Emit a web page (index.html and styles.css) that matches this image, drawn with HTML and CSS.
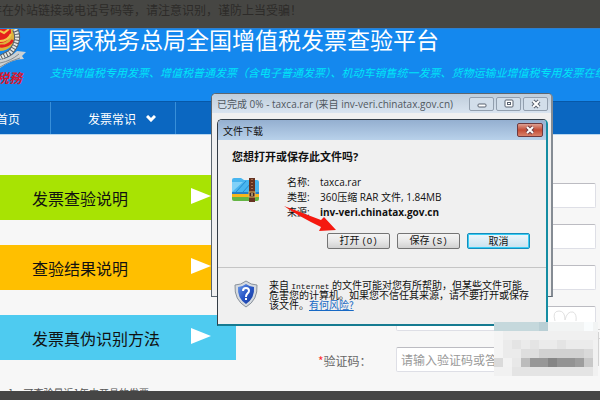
FILE: index.html
```html
<!DOCTYPE html>
<html lang="zh-CN">
<head>
<meta charset="utf-8">
<title>国家税务总局全国增值税发票查验平台</title>
<link rel="stylesheet" href="styles.css">
</head>
<body>
<div class="notice">存在外站链接或电话号码等，请注意识别，谨防上当受骗！</div>
<header class="header">
  <svg class="logo" width="27" height="59" viewBox="0 0 27 59" aria-hidden="true">
    <circle cx="0" cy="6" r="16" fill="#dcb23c"/>
    <circle cx="0" cy="3" r="11" fill="#e6211c"/>
    <path d="M0 2L4 4L9 0M0 12Q8 12 11 5" fill="none" stroke="#f4c84b" stroke-width="2"/>
    <path d="M0 17Q8 18 13 11" fill="none" stroke="#e6211c" stroke-width="3"/>
    <path d="M15 0Q21 11 10 24L0 29" fill="none" stroke="#586068" stroke-width="6"/>
    <path d="M15 0Q21 11 10 24L0 29" fill="none" stroke="#e6e8e4" stroke-width="4" stroke-dasharray="2 1"/>
    <path d="M0 31Q10 29 17 22L26 23L22 27L24 30Q12 30 0 39Z" fill="#cdd1d3"/>
    <path d="M0 34Q11 32 19 25M0 38Q9 32 20 29" fill="none" stroke="#858c91" stroke-width="1"/>
    <text class="logo-text" x="-4" y="54">税務</text>
  </svg>
  <div class="headline">
    <h1>国家税务总局全国增值税发票查验平台</h1>
    <p>支持增值税专用发票、增值税普通发票（含电子普通发票）、机动车销售统一发票、货物运输业增值税专用发票在线查验</p>
  </div>
</header>
<nav class="nav">
  <a class="home" href="#">首页</a>
  <a class="topic" href="#">发票常识
    <svg width="10" height="7" viewBox="0 0 10 7" aria-hidden="true"><path d="M1 1L5 5L9 1" fill="none" stroke="#fff" stroke-width="3"/></svg>
  </a>
</nav>
<main class="main">
  <section class="guides">
    <a class="guide green" href="#">发票查验说明<i></i></a>
    <a class="guide yellow" href="#">查验结果说明<i></i></a>
    <a class="guide blue" href="#">发票真伪识别方法<i></i></a>
    <p class="remark">1、可查验最近1年内开具的发票</p>
  </section>
  <form class="form">
    <input type="text" aria-label="发票代码">
    <input type="text" aria-label="发票号码">
    <input type="text" aria-label="开票日期">
    <input type="text" aria-label="开具金额">
    <label for="captcha"><b>*</b>验证码：</label>
    <input id="captcha" type="text" placeholder="请输入验证码或答案">
  </form>
</main>
<footer class="footer"></footer>

<section class="window progress">
  <div class="titlebar">
    <span>已完成 0% - taxca.rar (来自 inv-veri.chinatax.gov.cn)</span>
    <div class="controls">
      <button type="button" aria-label="最小化"><svg width="12" height="10" viewBox="0 0 12 10"><rect x="2" y="5" width="8" height="3" rx="1" fill="#fff" stroke="#596270"/></svg></button>
      <button type="button" aria-label="最大化"><svg width="12" height="10" viewBox="0 0 12 10"><rect x="2" y="1" width="8" height="7" rx="1" fill="#fff" stroke="#596270"/><rect x="4.500" y="3.500" width="3" height="2" fill="#fff" stroke="#596270"/></svg></button>
      <button type="button" aria-label="关闭"><svg width="12" height="10" viewBox="0 0 12 10"><path d="M3 2L9 8M9 2L3 8" stroke="#596270" stroke-width="4"/><path d="M3 2L9 8M9 2L3 8" stroke="#fff" stroke-width="2"/></svg></button>
    </div>
  </div>
</section>

<section class="window download">
  <div class="download-title">
    <span>文件下载</span>
    <button type="button" aria-label="关闭"><svg width="12" height="10" viewBox="0 0 12 10"><path d="M3 2L9 8M9 2L3 8" stroke="#704047" stroke-width="4"/><path d="M3 2L9 8M9 2L3 8" stroke="#fff" stroke-width="2"/></svg></button>
  </div>
  <div class="download-body">
    <h2>您想打开或保存此文件吗?</h2>
    <div class="file">
      <svg width="28" height="26" viewBox="0 0 28 26" aria-hidden="true">
        <path d="M0 3Q0 1 2 1H9L12 3H25Q27 3 27 5V17H0Z" fill="#48b5ef"/>
        <path d="M0 5L11 5L0 15Z" fill="#81d1f8"/>
        <path d="M4 15L14 4M11 15L19 6" stroke="#268bd1" stroke-width="1"/>
        <path d="M0 15H27V18H0Z" fill="#247ec7"/>
        <path d="M0 17H27V21H0Z" fill="#f7b51c"/>
        <path d="M0 20H27V22Q27 24 25 24H2Q0 24 0 22Z" fill="#64b544"/>
        <path d="M17 1H23V25H17Z" fill="#663321"/>
        <path d="M20 2V14" stroke="#a66f4e" stroke-width="2" stroke-dasharray="1 2"/>
        <rect x="17" y="15" width="6" height="5" fill="#3f211b" stroke="#e4b660"/>
        <path d="M20 16V19" stroke="#fff0b0"/>
      </svg>
      <dl>
        <dt>名称:</dt><dd>taxca.rar</dd>
        <dt>类型:</dt><dd>360压缩 RAR 文件, 1.84MB</dd>
        <dt>来源:</dt><dd class="host">inv-veri.chinatax.gov.cn</dd>
      </dl>
    </div>
    <div class="actions">
      <button type="button">打开<span>(O)</span></button>
      <button type="button">保存<span>(S)</span></button>
      <button type="button" class="default">取消</button>
    </div>
  </div>
  <div class="warning">
    <svg width="24" height="28" viewBox="0 0 24 28" aria-hidden="true">
      <defs><linearGradient id="shield" x1="0" y1="0" x2="1" y2="1"><stop offset="0" stop-color="#6c9bea"/><stop offset=".5" stop-color="#2856c6"/><stop offset="1" stop-color="#163a9c"/></linearGradient></defs>
      <path d="M12 1Q17 5 23 5Q24 20 12 27Q0 20 1 5Q7 5 12 1Z" fill="#d5dae0" stroke="#8a929b"/>
      <path d="M12 4Q16 7 20 7Q21 18 12 24Q3 18 4 7Q8 7 12 4Z" fill="url(#shield)"/>
      <path d="M9 11Q9 8 12 8Q15 8 15 11Q15 12 13 14Q12 15 12 17M12 18V20" fill="none" stroke="#fff" stroke-width="2"/>
    </svg>
    <p>来自 <span>Internet</span> 的文件可能对您有所帮助，但某些文件可能<br>危害您的计算机。如果您不信任其来源，请不要打开或保存<br>该文件。<a href="#">有何风险?</a></p>
  </div>
</section>

<svg class="pointer" width="54" height="28" viewBox="0 0 54 28" aria-hidden="true"><path d="M0 0L37 14L40 11L52 24L35 25L37 21Q14 10 0 0Z" fill="#f51910"/></svg>

<svg class="mosaic" width="106" height="70" viewBox="0 0 106 70" shape-rendering="crispEdges" aria-hidden="true">
  <path d="M61 15Q58 5 65 5Q71 5 71 14M71 14Q73 5 79 6Q83 8 82 15" fill="none" stroke="#e1e1e1" stroke-width="1" shape-rendering="auto"/>
  <path d="M104 23H106M104 26V60M104 32H106" stroke="#d3d3d3" fill="none"/>
  <path d="M0 16H104V70H0Z" fill="#ebebeb"/>
  <path d="M0 16H45V25H0Z" fill="#c5d8dc"/><path d="M45 16H54V25H45Z" fill="#b9cfd5"/>
  <path d="M54 16H104V25H54Z" fill="#f2f4f4"/><path d="M90 16H99V25H90Z" fill="#f9fcfd"/>
  <path d="M0 25H9V52H0Z" fill="#f4f4f4"/><path d="M9 25H36V34H9Z" fill="#efefef"/><path d="M36 25H104V34H36Z" fill="#f0f0f0"/>
  <path d="M18 34H27V43H18ZM36 34H45V43H36ZM63 34H72V43H63Z" fill="#e4e4e4"/>
  <path d="M27 43H45V52H27Z" fill="#dedede"/><path d="M45 43H90V52H45Z" fill="#d1d1d1"/><path d="M90 43H99V52H90Z" fill="#d9d9d9"/>
  <path d="M0 52H9V61H0Z" fill="#dadada"/><path d="M9 52H18V61H9Z" fill="#f2f2f2"/><path d="M18 52H27V61H18Z" fill="#e8e8e8"/>
  <path d="M27 52H36V61H27Z" fill="#bcbcbc"/><path d="M36 52H54V61H36Z" fill="#979797"/><path d="M54 52H63V61H54Z" fill="#858585"/><path d="M63 52H81V61H63Z" fill="#939393"/><path d="M81 52H90V61H81Z" fill="#9d9d9d"/><path d="M90 52H99V61H90Z" fill="#c8c8c8"/>
  <path d="M0 61H18V70H0Z" fill="#f1f1f1"/><path d="M18 61H99V70H18Z" fill="#e4e4e4"/><path d="M99 34H104V70H99Z" fill="#f1f1f1"/>
</svg>
</body>
</html>
```
FILE: styles.css
```css
* { box-sizing: border-box; }

body {
  position: relative;
  display: flex;
  flex-direction: column;
  height: 100vh;
  margin: 0;
  overflow: hidden;
  background: #f7f7f7;
  color: #111;
  font-family: "Open Sans", "Noto Sans CJK SC", sans-serif;
  font-size: 12px;
}

h1, h2, p, dl, dd { margin: 0; }
a { color: inherit; text-decoration: none; }
button { padding: 0; font-family: inherit; }

.notice,
.header,
.nav,
.footer { flex: none; }

.notice {
  height: 28px;
  text-indent: -10px;
  background: #464643;
  color: #2d2b29;
  font-family: "Noto Sans CJK SC", sans-serif;
  font-size: 12px;
  line-height: 20px;
  white-space: nowrap;
}

.header {
  display: flex;
  gap: 21px;
  height: 73px;
  overflow: hidden;
  background: #1488ee;
  border-top: 1px solid #2d7fd0;
  white-space: nowrap;
}
.logo { flex: none; }
.logo-text {
  fill: #d9162c;
  font-family: "Noto Sans CJK SC", sans-serif;
  font-size: 13px;
  font-style: italic;
  font-weight: 700;
}
.headline { font-family: "Noto Sans CJK SC", sans-serif; }
.headline h1 {
  color: #fff;
  font-size: 23px;
  font-weight: 400;
  line-height: 20px;
}
.headline p {
  margin-top: 14px;
  padding-left: 2px;
  color: #00e5f8;
  font-size: 11px;
  font-style: italic;
  line-height: 18px;
}

.nav {
  display: flex;
  height: 34px;
  background: #0b67c1;
  border-top: 1px solid #0758a8;
  border-bottom: 1px solid #b9d7ef;
  color: #fff;
  font-family: "Noto Sans CJK SC", sans-serif;
  font-size: 12px;
  line-height: 33px;
}
.nav a { border-right: 1px solid #388fd9; }
.home { width: 51px; text-indent: -4px; }
.topic {
  display: flex;
  align-items: center;
  gap: 10px;
  width: 125px;
  padding-left: 37px;
}

.main {
  display: flex;
  flex: 1;
  justify-content: space-between;
  min-height: 0;
  overflow: hidden;
}
.guides {
  display: flex;
  flex-direction: column;
  gap: 25px;
  width: 236px;
  padding-top: 40px;
  font-family: "Noto Sans CJK SC", sans-serif;
}
.guide {
  display: flex;
  flex: none;
  align-items: center;
  justify-content: space-between;
  height: 45px;
  padding: 0 25px 0 32px;
  font-size: 16px;
}
.guide i {
  width: 20px;
  height: 16px;
  margin-bottom: 3px;
  background: #fff;
  clip-path: polygon(0 0, 100% 50%, 0 100%);
}
.green { background: #a8e303; }
.yellow { background: #ffbf00; }
.blue { background: #4ecbf0; }
.remark {
  padding-left: 8px;
  color: #555;
  font-size: 10px;
  line-height: 16px;
}

.form {
  display: grid;
  grid-template-columns: 78px 200px;
  grid-auto-rows: 25px;
  row-gap: 16px;
  padding: 48px 4px 0 0;
  font-family: "Noto Sans CJK SC", sans-serif;
}
.form input {
  grid-column: 2;
  min-width: 0;
  height: 25px;
  padding: 0 4px;
  border: 1px solid #dedfe6;
  border-top-color: #bcbcc2;
  border-radius: 2px;
  background: #fff;
  font-family: inherit;
  font-size: 12px;
}
.form input::placeholder { color: #999; }
.form label {
  color: #666;
  line-height: 28px;
  white-space: nowrap;
}
.form label b { color: #f33; font-weight: 400; }

.footer { height: 9px; background: #464646; }

.window {
  position: absolute;
  border: 1px solid #44515e;
  background: #f0f0f0;
}
.progress {
  top: 93px;
  left: 211px;
  width: 342px;
  height: 204px;
  border: 1px solid #5c6670;
  border-right: 2px solid #858c94;
  border-radius: 5px 5px 0 0;
}
.titlebar {
  display: flex;
  align-items: center;
  justify-content: space-between;
  height: 19px;
  padding: 0 3px 0 5px;
  border-radius: 4px 4px 0 0;
  background: linear-gradient(#bfcddb, #d9e4f0);
  color: #505860;
  font-size: 10px;
  white-space: nowrap;
}
.controls { display: flex; gap: 2px; }
.controls button {
  display: grid;
  place-items: center;
  width: 25px;
  height: 14px;
  border: 1px solid #929fae;
  border-radius: 2px;
  background: #d2deea;
}

.download {
  top: 119px;
  left: 217px;
  width: 331px;
  height: 207px;
  border: 1px solid #333c45;
  border-right: 2px solid #158da3;
  border-bottom: 2px solid #167b91;
  border-radius: 5px 5px 0 0;
}
.download-title {
  display: flex;
  align-items: center;
  justify-content: space-between;
  height: 20px;
  padding: 0 3px 0 5px;
  border-radius: 4px 4px 0 0;
  background: linear-gradient(#94afd0, #b8d1ea);
  font-size: 10px;
}
.download-title button {
  display: grid;
  place-items: center;
  width: 26px;
  height: 14px;
  border: 1px solid #6d3a40;
  border-radius: 2px;
  background: linear-gradient(#dda093, #c34c36 50%, #d9826a);
}
.download-body {
  height: 128px;
  padding: 8px 16px 0 14px;
  border-bottom: 1px solid #c5c5c5;
}
.download h2 {
  font-size: 11px;
  font-weight: 700;
  line-height: 18px;
}
.file {
  display: flex;
  gap: 27px;
  margin-top: 9px;
}
.file svg { flex: none; margin-top: 2px; }
.file dl {
  display: grid;
  grid-template-columns: 33px auto;
  grid-auto-rows: 15px;
  align-items: center;
  font-size: 10px;
  line-height: 15px;
  white-space: nowrap;
}
.host { font-weight: 700; }
.actions {
  display: flex;
  justify-content: flex-end;
  gap: 7px;
  margin-top: 13px;
}
.actions button {
  width: 63px;
  height: 16px;
  border: 1px solid #747474;
  border-radius: 2px;
  background: linear-gradient(#f4f4f4, #e8e8e8 50%, #d2d2d2);
  color: #111;
  font-size: 10px;
  line-height: 12px;
}
.actions span {
  padding-left: 2px;
  font-family: "Liberation Mono", monospace;
  font-size: 9px;
}
.actions .default {
  border-color: #168cbc;
  background: linear-gradient(#edf6fb, #c9e1ef);
  box-shadow: inset 0 0 0 1px #38cdf4;
}
.warning {
  display: flex;
  gap: 11px;
  padding: 12px 0 0 16px;
  font-family: "Noto Sans CJK SC", sans-serif;
  font-size: 10px;
  line-height: 10px;
  white-space: nowrap;
}
.warning span {
  font-family: "Liberation Mono", monospace;
  font-size: 8px;
  line-height: 1px;
}
.warning a { color: #1769c5; text-decoration: underline; }

.pointer {
  position: absolute;
  top: 206px;
  left: 284px;
}
.mosaic {
  position: absolute;
  top: 306px;
  left: 494px;
}
```
